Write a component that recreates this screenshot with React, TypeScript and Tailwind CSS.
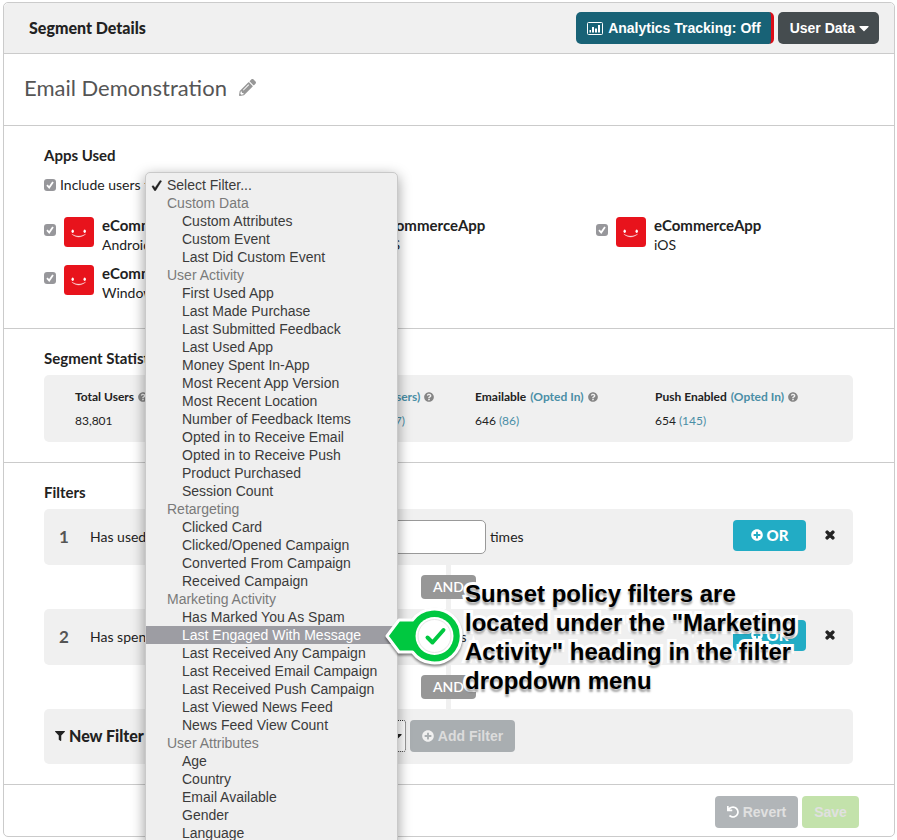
import { FaPencilAlt, FaPlusCircle, FaQuestionCircle, FaTimes, FaFilter, FaUndo, FaCaretDown } from "react-icons/fa";

type MenuEntry = { label: string; group?: boolean; active?: boolean };

const menu: MenuEntry[] = [
  { label: "Custom Data", group: true },
  { label: "Custom Attributes" },
  { label: "Custom Event" },
  { label: "Last Did Custom Event" },
  { label: "User Activity", group: true },
  { label: "First Used App" },
  { label: "Last Made Purchase" },
  { label: "Last Submitted Feedback" },
  { label: "Last Used App" },
  { label: "Money Spent In-App" },
  { label: "Most Recent App Version" },
  { label: "Most Recent Location" },
  { label: "Number of Feedback Items" },
  { label: "Opted in to Receive Email" },
  { label: "Opted in to Receive Push" },
  { label: "Product Purchased" },
  { label: "Session Count" },
  { label: "Retargeting", group: true },
  { label: "Clicked Card" },
  { label: "Clicked/Opened Campaign" },
  { label: "Converted From Campaign" },
  { label: "Received Campaign" },
  { label: "Marketing Activity", group: true },
  { label: "Has Marked You As Spam" },
  { label: "Last Engaged With Message", active: true },
  { label: "Last Received Any Campaign" },
  { label: "Last Received Email Campaign" },
  { label: "Last Received Push Campaign" },
  { label: "Last Viewed News Feed" },
  { label: "News Feed View Count" },
  { label: "User Attributes", group: true },
  { label: "Age" },
  { label: "Country" },
  { label: "Email Available" },
  { label: "Gender" },
  { label: "Language" },
];

const apps = [
  { id: "android", platform: "Android" },
  { id: "ios-1", platform: "iOS" },
  { id: "ios-2", platform: "iOS" },
  { id: "windows", platform: "Windows" },
];

const stats = [
  { title: "Total Users", note: "", value: "83,801", sub: "" },
  { title: "Lifetime Revenue", note: "(Users)", value: "$1,245,310.08", sub: "(1,597)" },
  { title: "Emailable", note: "(Opted In)", value: "646", sub: "(86)" },
  { title: "Push Enabled", note: "(Opted In)", value: "654", sub: "(145)" },
];

function Tick({ id }: { id: string }) {
  return (
    <span className="grid size-3 shrink-0">
      <input
        id={id}
        type="checkbox"
        defaultChecked
        className="col-start-1 row-start-1 size-3 appearance-none rounded-[3px] bg-[#97979b]"
      />
      <svg viewBox="0 0 12 12" className="pointer-events-none col-start-1 row-start-1 size-3" aria-hidden="true">
        <path d="M3 6.2 5.2 8.6 9 3" fill="none" stroke="#fff" strokeWidth="1.8" />
      </svg>
    </span>
  );
}

function AppIcon() {
  return (
    <svg viewBox="0 0 30 30" className="size-[30px] shrink-0" aria-hidden="true">
      <rect width="30" height="30" rx="3.5" fill="#e8131c" />
      <ellipse cx="8.7" cy="14.3" rx="1.2" ry="1.7" fill="#fff" />
      <ellipse cx="20.7" cy="14.3" rx="1.2" ry="1.7" fill="#fff" />
      <path d="M7.8 17.2Q14.7 21.2 21.6 17.2Q14.7 22.8 7.8 17.2Z" fill="#fff" stroke="#fff" strokeWidth=".3" />
    </svg>
  );
}

function ChartIcon() {
  return (
    <svg viewBox="0 0 16 13" className="h-[13px] w-4" aria-hidden="true">
      <rect x=".5" y=".5" width="15" height="12" rx="1" fill="none" stroke="#fff" />
      <path d="M2.500 8h1.500v2.500H2.500zM5 5h2v5.500H5zM8 6.500h2v4H8zM11 3h2v7.500h-2z" fill="#fff" />
    </svg>
  );
}

function Connector() {
  return (
    <div className="flex h-11 flex-col items-center">
      <span className="w-[5px] flex-1 bg-[#f0f0f0]" />
      <span className="flex h-6 w-[55px] items-center justify-center rounded bg-[#979797] text-sm font-semibold text-white">AND</span>
      <span className="w-[5px] flex-1 bg-[#f0f0f0]" />
    </div>
  );
}

function FilterRow({ number, text, unit, wide }: { number: number; text: string; unit: string; wide?: boolean }) {
  return (
    <div className="flex h-14 items-center rounded-[5px] bg-[#f0f0f0] pl-[15px] pr-[15px]">
      <span className="w-[31px] text-[17px] font-bold text-[#555]">{number}</span>
      <label htmlFor={`amount-${number}`} className="w-[170px] text-sm">{text}</label>
      <input
        id={`amount-${number}`}
        className={`${wide ? "mr-1 w-[226px]" : "mr-9 w-[130px]"} h-[34px] rounded-[5px] border border-[#999] bg-white px-2`}
      />
      <span className="text-sm">{unit}</span>
      <div className="ml-auto flex items-center gap-4 pb-1">
        <button className="flex h-[31px] w-[73px] items-center justify-center gap-1 rounded bg-[#22acc5] text-[15px] font-black text-white">
          <FaPlusCircle className="size-3" aria-hidden="true" />
          OR
        </button>
        <button aria-label={`Remove filter ${number}`} className="p-0.5">
          <FaTimes className="size-3" stroke="#222" strokeWidth="50" aria-hidden="true" />
        </button>
      </div>
    </div>
  );
}

function FilterMenu() {
  return (
    <ul
      role="listbox"
      aria-label="Select Filter"
      className="absolute left-[145px] top-[172px] w-[253px] rounded-[5px] border border-[#c9c9c9] bg-[#efefef] py-[3px] font-['Liberation_Sans',Arial,sans-serif] text-sm leading-[18px] text-[#3b3b3b] shadow-[0_4px_14px_rgba(0,0,0,0.4)]"
    >
      <li role="option" aria-selected="true" className="flex items-center gap-[5px] pl-[5px]">
        <svg viewBox="0 0 10 10" className="size-[11px]" aria-hidden="true">
          <path d="M.8 5.800 2 5 3.700 7 8.200.4 9.700 1 4.200 9.700H3.200Z" fill="#222" stroke="#222" strokeWidth=".3" />
        </svg>
        Select Filter...
      </li>
      {menu.map((entry) => (
        <li
          key={entry.label}
          role={entry.group ? "presentation" : "option"}
          className={entry.group ? "pl-[21px] text-[#7a7a7a]" : entry.active ? "bg-[#9d9da3] pl-9 text-white" : "pl-9"}
        >
          {entry.label}
        </li>
      ))}
    </ul>
  );
}

function Callout() {
  return (
    <div className="absolute left-[384px] top-[579px] flex">
      <svg viewBox="0 0 84 112" className="h-28 w-[84px] drop-shadow-[0_2px_1px_rgba(0,0,0,0.45)]" aria-hidden="true">
        <path
          d="M3 57 15 41H28.500A27 27 0 1 1 28.500 73H15Z"
          fill="#00c840"
          stroke="#fff"
          strokeWidth="3"
          strokeLinejoin="round"
        />
        <circle cx="50.500" cy="57" r="19" fill="#fff" />
        <circle cx="50.500" cy="57" r="16.500" fill="none" stroke="#e6e6e6" />
        <path d="M43.500 58.500 48.500 63.500 59.500 51" fill="none" stroke="#00c840" strokeWidth="4" strokeLinecap="round" strokeLinejoin="round" />
      </svg>
      <p className="-ml-[3px] w-[360px] font-['Liberation_Sans',Arial,sans-serif] text-2xl leading-[29px] font-bold text-black [-webkit-text-stroke:6px_white] [paint-order:stroke_fill] [text-shadow:0_3px_2px_rgba(0,0,0,0.35)]">
        Sunset policy filters are located under the "Marketing Activity" heading in the filter dropdown menu
      </p>
    </div>
  );
}

export default function App() {
  return (
    <main className="relative overflow-hidden bg-white pt-0.5 pr-0.5 pb-[3px] pl-[3px] font-[Lato,'Open_Sans',sans-serif] text-[#222]">
      <div className="rounded-[5px] border border-[#cbcbcb]">
        <header className="flex h-[51px] items-center gap-1 rounded-t-[5px] border-b border-[#cbcbcb] bg-[#f0f0f0] pr-[15px] pl-[25px] font-['Liberation_Sans',Arial,sans-serif]">
          <h1 className="mr-auto font-[Lato,'Open_Sans',sans-serif] text-base font-black">Segment Details</h1>
          <button className="flex h-8 items-center gap-[5px] rounded-[5px] border-r-3 border-[#dc0d17] bg-[#186276] pr-2.5 pl-[11px] text-sm font-bold text-white">
            <ChartIcon />
            Analytics Tracking: Off
          </button>
          <button className="flex h-8 items-center gap-1 rounded-[5px] bg-[#454c4f] pr-2.5 pl-3 text-sm font-bold text-white">
            User Data
            <FaCaretDown className="h-4 w-2.5" aria-hidden="true" />
          </button>
        </header>

        <section className="flex h-[72px] items-center gap-3 border-b border-[#cbcbcb] px-5 pb-[5px]">
          <h2 className="text-[22px] text-[#555]">Email Demonstration</h2>
          <button aria-label="Edit name">
            <FaPencilAlt className="size-[17px] text-[#979797]" aria-hidden="true" />
          </button>
        </section>

        <section className="h-[203px] border-b border-[#cbcbcb] px-10 pt-[19px]">
          <h3 className="text-[15px] leading-5 font-bold">Apps Used</h3>
          <div className="mt-2.5 flex h-5 items-center gap-1 text-sm">
            <Tick id="all-apps" />
            <label htmlFor="all-apps">Include users from all apps</label>
          </div>
          <div className="mt-5 grid grid-cols-[276fr_276fr_258fr]">
            {apps.map((app) => (
              <div key={app.id} className="flex h-12 gap-2">
                <div className="pt-[9px]">
                  <Tick id={app.id} />
                </div>
                <div className="pt-0.5">
                  <AppIcon />
                </div>
                <label htmlFor={app.id} className="text-sm leading-5">
                  <b className="block text-[15px] leading-5">eCommerceApp</b>
                  <span className="block leading-5">{app.platform}</span>
                </label>
              </div>
            ))}
          </div>
        </section>

        <section className="h-[134px] border-b border-[#cbcbcb] pt-[19px] pr-[41px] pl-10">
          <h3 className="text-[15px] leading-5 font-bold">Segment Statistics</h3>
          <dl className="mt-[7px] grid h-[67px] grid-cols-[212fr_188fr_180fr_198fr] rounded-[5px] bg-[#f0f0f0] pt-3 pl-[31px] text-xs">
            {stats.map((stat) => (
              <div key={stat.title}>
                <dt className="flex h-5 items-center gap-1 font-bold">
                  <span>{stat.title}</span>
                  {stat.note && <span className="text-[#4a8ea6]">{stat.note}</span>}
                  <FaQuestionCircle className="size-2.5 text-[#858585]" aria-hidden="true" />
                </dt>
                <dd className="mt-1 flex h-5 items-center gap-[3px]">
                  {stat.value}
                  {stat.sub && <span className="text-[#4a8ea6]">{stat.sub}</span>}
                </dd>
              </div>
            ))}
          </dl>
        </section>

        <section className="h-[322px] border-b border-[#cbcbcb] pt-[19px] pr-[41px] pl-10">
          <h3 className="mb-[7px] text-[15px] leading-5 font-bold">Filters</h3>
          <FilterRow number={1} text="Has used these apps" unit="times" wide />
          <Connector />
          <FilterRow number={2} text="Has spent at least" unit="dollars" />
          <Connector />
          <div className="flex h-[55px] items-center rounded-[5px] bg-[#f0f0f0] pb-0.5 pl-[11px]">
            <label htmlFor="new-filter" className="flex w-[100px] items-center gap-1 text-base font-black">
              <FaFilter className="size-2.5" aria-hidden="true" />
              New Filter
            </label>
            <span className="grid w-[251px] items-center">
              <select
                id="new-filter"
                className="col-start-1 row-start-1 h-8 w-full appearance-none rounded-[3px] border border-dotted border-[#333] bg-white px-2 text-sm"
              >
                <option>Select Filter...</option>
              </select>
              <FaCaretDown className="pointer-events-none col-start-1 row-start-1 mr-1 h-4 w-2.5 justify-self-end" aria-hidden="true" />
            </span>
            <button disabled className="ml-1 flex h-8 w-[105px] items-center justify-center gap-1 rounded bg-[#a9aeb1] font-['Liberation_Sans',Arial,sans-serif] text-sm font-bold text-[#dcdcdc]">
              <FaPlusCircle className="size-3 text-[#f0f0f0]" aria-hidden="true" />
              Add Filter
            </button>
          </div>
        </section>

        <footer className="flex h-[51px] items-center justify-end gap-1 pt-0.5 pr-[35px] font-['Liberation_Sans',Arial,sans-serif] text-sm font-bold">
          <button disabled className="flex h-8 w-[83px] items-center justify-center gap-1 rounded bg-[#b1b5b8] text-[#e0e0e0]">
            <FaUndo className="size-3 text-white" aria-hidden="true" />
            Revert
          </button>
          <button disabled className="h-8 w-[57px] rounded bg-[#c3e2ab] text-[#e0e0e0]">Save</button>
        </footer>
      </div>
      <FilterMenu />
      <Callout />
    </main>
  );
}
